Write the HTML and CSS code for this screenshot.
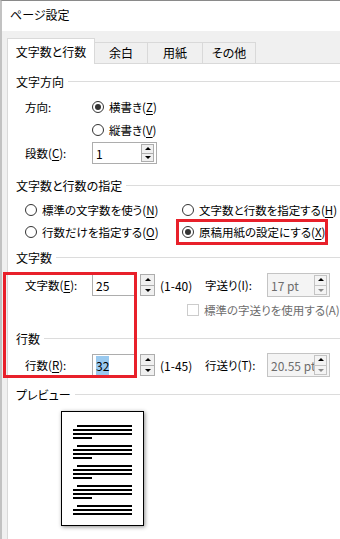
FILE: index.html
```html
<!DOCTYPE html>
<html lang="ja">
<head>
<meta charset="UTF-8">
<meta name="viewport" content="width=device-width, initial-scale=1.0">
<title>ページ設定</title>
<link rel="stylesheet" href="styles.css">
</head>
<body>
<div class="dialog">
    <div class="titlebar">ページ設定</div>
    <div class="tabs">
        <div class="tab active">文字数と行数</div>
        <div class="tab w-margin">余白</div>
        <div class="tab w-paper">用紙</div>
        <div class="tab w-other">その他</div>
    </div>
    <div class="panel">
        <div class="head">文字方向</div>
        <div class="row mt4">
            <span class="label">方向:</span>
            <span class="radio"><i class="dot on"></i>横書き(<u>Z</u>)</span>
        </div>
        <div class="row mt1">
            <span class="label"></span>
            <span class="radio"><i class="dot"></i>縦書き(<u>V</u>)</span>
        </div>
        <div class="row mt1">
            <span class="label">段数(<u>C</u>):</span>
            <div class="field wide">
                <span class="val">1</span>
                <div class="spin inner"><b class="up"></b><b class="down"></b></div>
            </div>
        </div>

        <div class="head mt10">文字数と行数の指定</div>
        <div class="row mt3">
            <span class="radio col-l"><i class="dot"></i>標準の文字数を使う(<u>N</u>)</span>
            <span class="radio"><i class="dot"></i>文字数と行数を指定する(<u>H</u>)</span>
        </div>
        <div class="row">
            <span class="radio col-l"><i class="dot"></i>行数だけを指定する(<u>O</u>)</span>
            <span class="radio"><i class="dot on"></i>原稿用紙の設定にする(<u>X</u>)</span>
        </div>

        <div class="head mt3">文字数</div>
        <div class="row mt6">
            <span class="label">文字数(<u>E</u>):</span>
            <div class="field short"><span class="val">25</span></div>
            <div class="spin outer"><b class="up"></b><b class="down"></b></div>
            <span class="range">(1-40)</span>
            <span class="label2">字送り(I):</span>
            <div class="field off">
                <span class="val">17 pt</span>
                <div class="spin inner"><b class="up"></b><b class="down"></b></div>
            </div>
        </div>
        <div class="row mt3">
            <span class="check"><i class="box"></i>標準の字送りを使用する(A)</span>
        </div>

        <div class="head mt6">行数</div>
        <div class="row mt5">
            <span class="label">行数(<u>R</u>):</span>
            <div class="field short"><span class="val"><span class="sel">32</span></span></div>
            <div class="spin outer"><b class="up"></b><b class="down"></b></div>
            <span class="range">(1-45)</span>
            <span class="label2">行送り(T):</span>
            <div class="field off">
                <span class="val">20.55 pt</span>
                <div class="spin inner"><b class="up"></b><b class="down"></b></div>
            </div>
        </div>

        <div class="head mt7">プレビュー</div>
        <div class="preview">
            <div class="page">
                <div class="para"><i class="ln first"></i><i class="ln"></i><i class="ln"></i><i class="ln end"></i></div>
                <div class="para"><i class="ln first"></i><i class="ln"></i><i class="ln"></i><i class="ln end"></i></div>
                <div class="para"><i class="ln first"></i><i class="ln"></i><i class="ln"></i><i class="ln end"></i></div>
                <div class="para"><i class="ln first"></i><i class="ln"></i><i class="ln"></i><i class="ln end"></i></div>
                <div class="para"><i class="ln first"></i><i class="ln"></i><i class="ln"></i></div>
            </div>
        </div>
    </div>

    <!-- red markers drawn over the dialog -->
    <div class="mark mark-option"></div>
    <div class="mark mark-fields"></div>
</div>
</body>
</html>
```

FILE: styles.css
```css
body {
    margin: 0;
    font-family: "Noto Sans CJK JP", "Noto Sans", sans-serif;
    font-size: 11.5px;
    font-feature-settings: "palt";
    color: #000;
}

.dialog {
    position: relative;
    width: 338px;
    height: 538px;
    overflow: hidden;
    background: #f0f0f0;
    border-left: 2px solid #c2c2c2;
    border-top: 1px solid #8a8a8a;
}

.titlebar {
    height: 30px;
    line-height: 28px;
    padding-left: 8px;
    font-size: 12px;
    background: #fff;
}

/* tabs */
.tabs {
    display: flex;
    align-items: flex-end;
    height: 32px;
    padding-left: 5px;
    font-size: 12px;
}
.tab {
    height: 20px;
    line-height: 20px;
    text-align: center;
    border: 1px solid #d9d9d9;
    border-bottom: none;
    margin-left: -1px;
}
.tab.active {
    position: relative;
    z-index: 1;
    width: 86px;
    height: 25px;
    line-height: 25px;
    margin-left: 0;
    margin-bottom: -1px;
    background: #fff;
}
.w-margin { width: 52px; }
.w-paper { width: 54px; }
.w-other { width: 52px; }

.panel {
    display: flex;
    flex-direction: column;
    width: 360px;
    height: 480px;
    margin-left: 5px;
    padding: 6px 0 0 8px;
    background: #fff;
    border: 1px solid #d9d9d9;
}

/* group headings with the rule after them */
.head {
    display: flex;
    align-items: center;
    gap: 4px;
    height: 22px;
    font-size: 12px;
}
.head::after {
    content: "";
    flex: 1;
    border-top: 1px solid #dcdcdc;
}

.row {
    display: flex;
    align-items: center;
    height: 22px;
    padding-left: 9px;
    white-space: nowrap;
}

.mt1 { margin-top: 1px; }
.mt3 { margin-top: 3px; }
.mt4 { margin-top: 4px; }
.mt5 { margin-top: 5px; }
.mt6 { margin-top: 6px; }
.mt7 { margin-top: 7px; }
.mt10 { margin-top: 10px; }

.label {
    width: 67px;
    flex: none;
}
.label2 {
    width: 62px;
    flex: none;
}

u {
    text-underline-offset: 2px;
}

/* radio buttons */
.radio {
    display: flex;
    align-items: center;
}
.col-l {
    width: 157px;
}
.dot {
    position: relative;
    width: 10px;
    height: 10px;
    margin-right: 5px;
    border: 1px solid #333;
    border-radius: 50%;
    background: #fff;
}
.dot.on::after {
    content: "";
    position: absolute;
    left: 2px;
    top: 2px;
    width: 6px;
    height: 6px;
    border-radius: 50%;
    background: #333;
}

/* check box (disabled) */
.check {
    display: flex;
    align-items: center;
    margin-left: 162px;
    color: #6d6d6d;
}
.box {
    width: 10px;
    height: 10px;
    margin-right: 5px;
    border: 1px solid #cccccc;
    background: #fff;
}

/* number fields */
.field {
    position: relative;
    display: flex;
    align-items: center;
    height: 20px;
    border: 1px solid #adadad;
    background: #fff;
    flex: none;
    font-size: 12px;
}
.field.wide { width: 63px; }
.field.short { width: 41px; }
.field.off {
    width: 61px;
    height: 22px;
    border-color: #c4c4c4;
    background: #f4f4f4;
    color: #6d6d6d;
    overflow: hidden;
}
.val {
    padding-left: 3px;
    white-space: nowrap;
}
.sel {
    background: #99c9ef;
    padding: 1px 0;
}

.spin {
    display: flex;
    flex-direction: column;
    flex: none;
}
.spin b {
    position: relative;
    flex: 1;
    border: 1px solid #adadad;
    background: #f0f0f0;
}
.spin b + b {
    margin-top: -1px;
}
.spin b::after {
    content: "";
    position: absolute;
    left: 50%;
    top: 50%;
    margin-left: -3px;
    border-left: 3px solid transparent;
    border-right: 3px solid transparent;
}
.spin .up::after {
    margin-top: -2px;
    border-bottom: 3px solid #000;
}
.spin .down::after {
    margin-top: -1px;
    border-top: 3px solid #000;
}
.spin.outer {
    width: 15px;
    height: 22px;
    margin-left: 5px;
}
.spin.inner {
    position: absolute;
    right: 2px;
    top: 1px;
    width: 13px;
    height: 18px;
}
.field.off .spin.inner {
    height: 20px;
    background: #f4f4f4;
}
.field.off .spin b {
    border-color: #c4c4c4;
    background: #f4f4f4;
}
.field.off .spin .down::after {
    border-top-color: #8a8a8a;
}

.range {
    width: 45px;
    margin-left: 5px;
    flex: none;
    font-size: 12px;
}

/* preview page */
.preview {
    margin: 6px 0 0 45px;
}
.page {
    width: 81px;
    height: 100px;
    padding-top: 13px;
    border: 1px solid #000;
    background: #fff;
    box-shadow: 1px 1px 4px rgba(0, 0, 0, 0.45);
}
.para {
    display: flex;
    flex-direction: column;
    gap: 2px;
    margin: 0 0 6px 11px;
}
.ln {
    display: block;
    width: 59px;
    height: 2px;
    background: #000;
}
.ln.first {
    width: 55px;
    margin-left: 4px;
}
.ln.end {
    width: 19px;
}

/* red annotations */
.mark {
    position: absolute;
    border: 3px solid #e8202a;
}
.mark-option {
    left: 174px;
    top: 218px;
    width: 146px;
    height: 20px;
}
.mark-fields {
    left: 1px;
    top: 271px;
    width: 128px;
    height: 100px;
}
```
